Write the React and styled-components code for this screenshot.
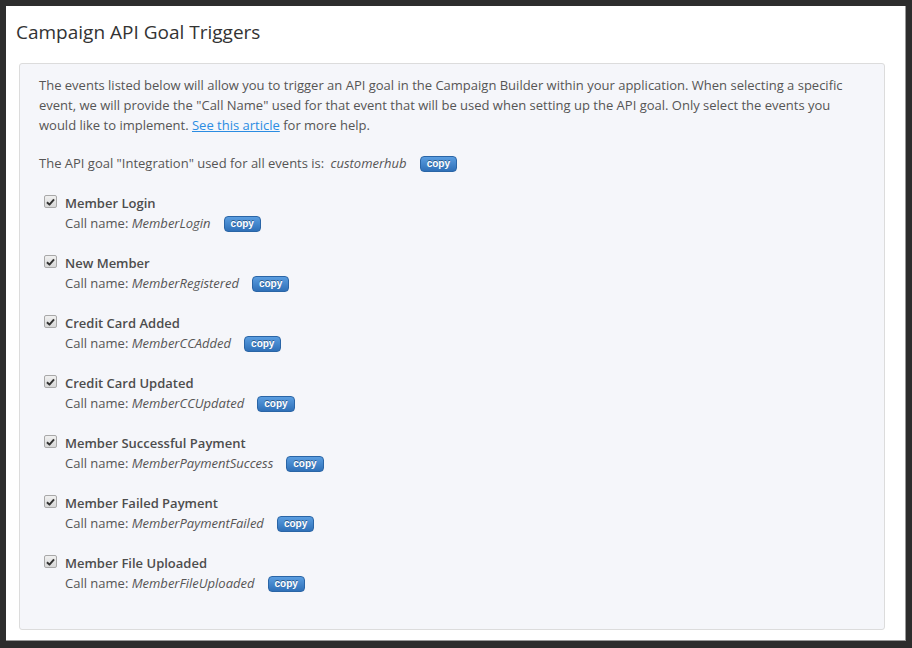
import styled, { createGlobalStyle } from "styled-components";

const GlobalStyle = createGlobalStyle`
  html, body {
    margin: 0;
    height: 100%;
    background: #2d2d2d;
  }
  body {
    padding: 6px 6px 7px 6px;
    box-sizing: border-box;
    font-family: "Open Sans", "Liberation Sans", sans-serif;
  }
  #root {
    height: 100%;
  }
`;

const Card = styled.div`
  height: 100%;
  box-sizing: border-box;
  background: #fff;
  border-right: 1px solid #9a9a9a;
  border-bottom: 1px solid #9a9a9a;
  display: flex;
  flex-direction: column;
  padding: 0 20px 10px 13px;
`;

const Title = styled.h1`
  margin: 12px 0 0 -3px;
  font-size: 19px;
  font-weight: 400;
  line-height: 28px;
  color: #333;
`;

const Panel = styled.div`
  margin-top: 17px;
  flex: 1;
  background: #f5f6fa;
  border: 1px solid #dcdcdc;
  border-radius: 3px;
  padding: 11px 19px 0 19px;
  font-size: 13px;
  line-height: 20px;
  color: #555;
`;

const Intro = styled.p`
  margin: 0 0 18px;
`;

const Link = styled.a`
  color: #2a8ce2;
  text-decoration: underline;
`;

const GoalLine = styled.div`
  margin-bottom: 20px;
`;

const Value = styled.em`
  font-style: italic;
  margin: 0 ${(p) => p.$gap || 13}px 0 ${(p) => p.$lead || 0}px;
`;

const CopyButton = styled.button`
  display: inline-block;
  vertical-align: middle;
  height: 16px;
  padding: 0 6px;
  margin-top: -2px;
  border: 1px solid #2a65a6;
  border-radius: 4px;
  background: linear-gradient(#5a9de0, #2f70b8);
  color: #fff;
  font-family: "Liberation Sans", Arial, sans-serif;
  font-weight: 700;
  font-size: 10px;
  line-height: 14px;
  text-shadow: 0 -1px 0 rgba(0, 0, 0, 0.4);
  cursor: pointer;
`;

const Event = styled.div`
  display: flex;
  align-items: flex-start;
  gap: 8px;
  margin: 0 0 20px 5px;
`;

const Check = styled.span`
  flex: none;
  width: 11px;
  height: 11px;
  margin-top: 2px;
  border: 1px solid #a8a8a8;
  border-radius: 2px;
  background: linear-gradient(#f0f0f0, #d8d8d8);
  display: flex;
  align-items: center;
  justify-content: center;
`;

const EventText = styled.div`
  display: flex;
  flex-direction: column;
`;

const EventName = styled.div`
  font-weight: 600;
  color: #4d4d4d;
`;

const CallLine = styled.div``;

const events = [
  ["Member Login", "MemberLogin"],
  ["New Member", "MemberRegistered"],
  ["Credit Card Added", "MemberCCAdded"],
  ["Credit Card Updated", "MemberCCUpdated"],
  ["Member Successful Payment", "MemberPaymentSuccess"],
  ["Member Failed Payment", "MemberPaymentFailed"],
  ["Member File Uploaded", "MemberFileUploaded"],
];

function CheckMark() {
  return (
    <svg width="9" height="8" viewBox="0 0 10 9">
      <path d="M1 4.8 L3.8 7.5 L9 1.5" fill="none" stroke="#333" strokeWidth="2.2" strokeLinejoin="round" />
    </svg>
  );
}

export default function App() {
  return (
    <>
      <GlobalStyle />
      <Card>
        <Title>Campaign API Goal Triggers</Title>
        <Panel>
          <Intro>
            The events listed below will allow you to trigger an API goal in the Campaign Builder within your
            application. When selecting a specific event, we will provide the "Call Name" used for that event that
            will be used when setting up the API goal. Only select the events you would like to implement.{" "}
            <Link href="#">See this article</Link> for more help.
          </Intro>
          <GoalLine>
            The API goal "Integration" used for all events is: <Value $lead={3} $gap={13}>customerhub</Value>
            <CopyButton>copy</CopyButton>
          </GoalLine>
          {events.map(([name, call]) => (
            <Event key={call}>
              <Check>
                <CheckMark />
              </Check>
              <EventText>
                <EventName>{name}</EventName>
                <CallLine>
                  Call name: <Value>{call}</Value>
                  <CopyButton>copy</CopyButton>
                </CallLine>
              </EventText>
            </Event>
          ))}
        </Panel>
      </Card>
    </>
  );
}
